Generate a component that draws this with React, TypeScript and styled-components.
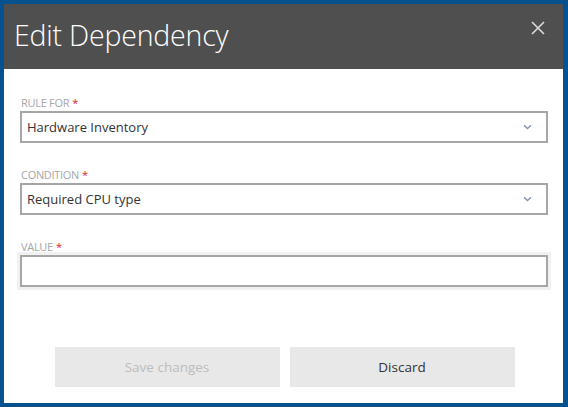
import React from "react";
import styled, { createGlobalStyle } from "styled-components";

const Global = createGlobalStyle`
  html, body { margin: 0; padding: 0; }
  body { background: #06528f; font-family: "Open Sans", "Noto Sans", sans-serif; }
  * { box-sizing: border-box; }
`;

const Frame = styled.div`
  height: 407px;
  width: 568px;
  padding: 4px 5px 4px 4px;
  display: flex;
`;

const Dialog = styled.div`
  flex: 1;
  background: #ffffff;
  display: flex;
  flex-direction: column;
`;

const Header = styled.div`
  height: 65px;
  background: #4f4f4f;
  display: flex;
  align-items: center;
  justify-content: space-between;
  padding: 0 18px 0 10px;
`;

const Title = styled.h1`
  margin: 0;
  font-family: "Open Sans", sans-serif;
  font-weight: 300;
  font-size: 28.5px;
  color: #ffffff;
  letter-spacing: -0.2px;
  padding-bottom: 4px;
`;

const CloseButton = styled.button`
  border: 0;
  background: transparent;
  padding: 0;
  width: 14px;
  height: 14px;
  display: flex;
  margin-top: -18px;
  cursor: pointer;
`;

const Body = styled.div`
  flex: 1;
  display: flex;
  flex-direction: column;
  padding: 27px 15px 16px 16px;
`;

const Field = styled.div`
  display: flex;
  flex-direction: column;
  margin-bottom: 25px;
`;

const Label = styled.label`
  font-size: 11px;
  line-height: 14px;
  height: 14px;
  color: #a6a6a6;
  text-transform: uppercase;
  letter-spacing: -0.3px;
  margin-bottom: 1px;
  padding-left: 1px;
`;

const Required = styled.span`
  color: #d9261c;
  margin-left: 3px;
`;

const SelectBox = styled.div`
  height: 32px;
  border: 2px solid #a6a6a6;
  display: flex;
  align-items: center;
  justify-content: space-between;
  padding: 0 14px 0 5px;
  font-size: 13px;
  color: #333333;
`;

const InputBox = styled.div`
  height: 32px;
  border: 2px solid #a6a6a6;
  box-shadow: 0 0 0 3px #f1f1f1;
  background: #fff;
`;

const Footer = styled.div`
  margin-top: auto;
  display: flex;
  justify-content: center;
  gap: 10px;
  padding-left: 1px;
`;

const Button = styled.button<{ $disabled?: boolean }>`
  width: 225px;
  height: 40px;
  border: 0;
  background: #e8e8e8;
  font-family: "Open Sans", sans-serif;
  font-size: 13.5px;
  color: ${(p) => (p.$disabled ? "#bcbcbc" : "#333333")};
  cursor: ${(p) => (p.$disabled ? "default" : "pointer")};
`;

const Chevron = () => (
  <svg width="9" height="6" viewBox="0 0 9 6">
    <path d="M1 1.2 L4.5 4.6 L8 1.2" fill="none" stroke="#8494ad" strokeWidth="1.4" />
  </svg>
);

const CloseIcon = () => (
  <svg width="14" height="14" viewBox="0 0 14 14">
    <path d="M1 1 L13 13 M13 1 L1 13" stroke="#dcdcdc" strokeWidth="1.6" fill="none" />
  </svg>
);

export default function App() {
  return (
    <>
      <Global />
      <Frame>
        <Dialog>
          <Header>
            <Title>Edit Dependency</Title>
            <CloseButton aria-label="Close">
              <CloseIcon />
            </CloseButton>
          </Header>
          <Body>
            <Field>
              <Label>
                Rule for<Required>*</Required>
              </Label>
              <SelectBox>
                <span>Hardware Inventory</span>
                <Chevron />
              </SelectBox>
            </Field>
            <Field>
              <Label>
                Condition<Required>*</Required>
              </Label>
              <SelectBox>
                <span>Required CPU type</span>
                <Chevron />
              </SelectBox>
            </Field>
            <Field>
              <Label>
                Value<Required>*</Required>
              </Label>
              <InputBox />
            </Field>
            <Footer>
              <Button $disabled>Save changes</Button>
              <Button>Discard</Button>
            </Footer>
          </Body>
        </Dialog>
      </Frame>
    </>
  );
}
